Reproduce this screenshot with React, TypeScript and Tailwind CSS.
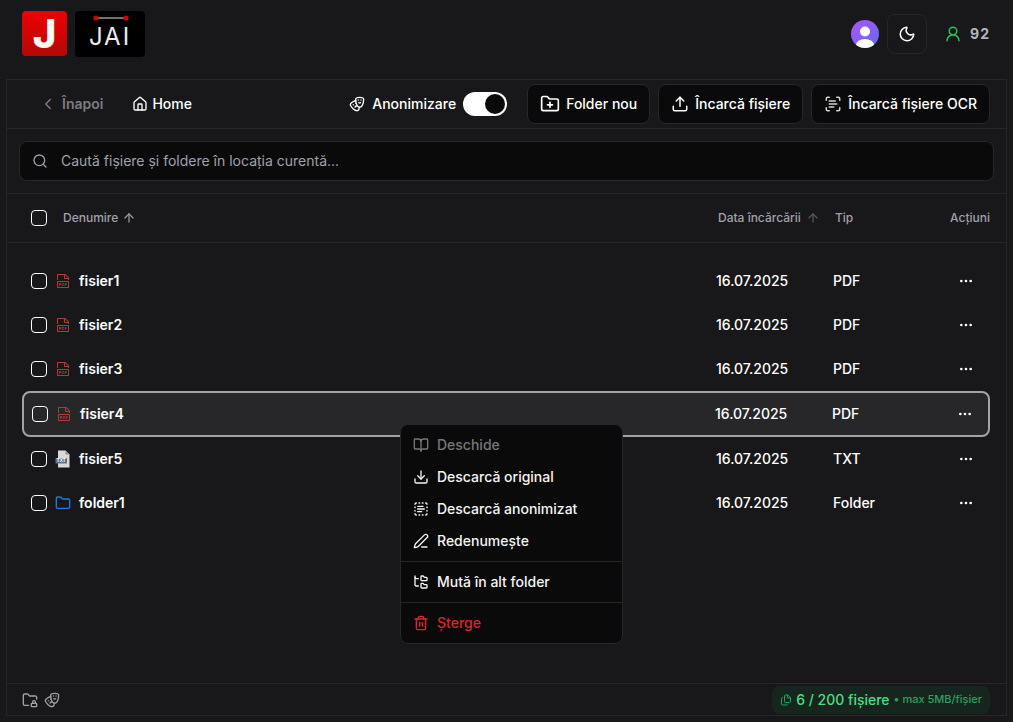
import { ArrowUp, BookOpen, ChevronLeft, Download, Drama, Ellipsis, Files, Folder, FolderLock, FolderPlus, FolderTree, House, Moon, PenLine, ScanText, Search, TextSelect, Trash2, Upload, UserRound } from "lucide-react";
import { VscFilePdf } from "react-icons/vsc";

function Box() {
  return <span className="block h-4 w-4 shrink-0 rounded-[4px] border border-white" />;
}

function TxtIcon() {
  return (
    <svg width="16" height="18" viewBox="0 0 16 18" className="shrink-0">
      <path d="M3 0.5h7.5L14.5 4.5V17.5H3z" fill="#d8d8d8" />
      <path d="M10.5 0.5V4.5H14.5z" fill="#8f8f8f" />
      <rect x="0.5" y="8" width="11.5" height="5.5" fill="#5f7286" />
      <text x="6.2" y="12.4" textAnchor="middle" fontSize="4.6" fontWeight="700" fill="#fff" fontFamily="Liberation Sans, sans-serif">TXT</text>
    </svg>
  );
}

type RowData = { name: string; type: string; kind: "pdf" | "txt" | "folder"; hi?: boolean };
const rows: RowData[] = [
  { name: "fisier1", type: "PDF", kind: "pdf" },
  { name: "fisier2", type: "PDF", kind: "pdf" },
  { name: "fisier3", type: "PDF", kind: "pdf" },
  { name: "fisier4", type: "PDF", kind: "pdf", hi: true },
  { name: "fisier5", type: "TXT", kind: "txt" },
  { name: "folder1", type: "Folder", kind: "folder" },
];

function Row({ r }: { r: RowData }) {
  return (
    <div className={r.hi ? "flex h-[46px] items-center rounded-lg border-2 border-[#a3a3a3] bg-[#27272a] pl-[8px] pr-[7px]" : "flex h-11 items-center pl-[9px] pr-[8px]"}>
      <Box />
      <div className="flex min-w-0 flex-1 items-center">
        <span className="ml-[8px] flex w-[16px] justify-center">
          {r.kind === "pdf" && <VscFilePdf className="h-[16px] w-[16px] text-[#b03a3a]" />}
          {r.kind === "txt" && <TxtIcon />}
          {r.kind === "folder" && <Folder className="h-4 w-4 text-[#1d7fd1]" />}
        </span>
        <span className="ml-[8px] text-sm font-semibold text-white">{r.name}</span>
      </div>
      <span className="w-[117px] text-sm font-medium text-white">16.07.2025</span>
      <span className="w-[117px] text-sm font-medium text-white">{r.type}</span>
      <span className="flex w-8 justify-center text-white"><Ellipsis className="h-4 w-4" /></span>
    </div>
  );
}

function ToolBtn({ icon, label }: { icon: React.ReactNode; label: string }) {
  return (
    <button className="flex h-10 items-center gap-[6px] rounded-lg border border-[#27272a] bg-[#0a0a0a] px-3 text-sm font-medium text-white">
      {icon}
      {label}
    </button>
  );
}

function MenuItem({ icon, label, cls }: { icon: React.ReactNode; label: string; cls: string }) {
  return (
    <div className={"flex h-8 items-center gap-2 rounded px-2 text-sm font-medium " + cls}>
      {icon}
      {label}
    </div>
  );
}

export default function App() {
  return (
    <div className="relative flex h-[722px] w-full flex-col overflow-hidden bg-[#18181b] [font-family:Inter,sans-serif]">
      <header className="flex h-[79px] shrink-0 items-start justify-between pl-[22px] pr-[23px]">
        <div className="mt-[11px] flex gap-2">
          <div className="flex h-[45px] w-[45px] items-center justify-center rounded-[4px] bg-gradient-to-b from-[#ee0000] to-[#b30808]">
            <span className="text-[40px] font-extrabold leading-none text-[#fff8f0]">J</span>
          </div>
          <div className="flex h-[46px] w-[70px] items-center justify-center rounded-[4px] bg-black">
            <svg width="70" height="46" viewBox="0 0 70 46">
              <line x1="21" y1="7" x2="51" y2="7" stroke="#e5e5e5" strokeWidth="1" />
              <circle cx="21" cy="7" r="2.6" fill="#d60000" />
              <circle cx="51" cy="7" r="2.6" fill="#d60000" />
              <text x="35" y="34" textAnchor="middle" fontSize="24" letterSpacing="2" fontWeight="400" fill="#ececec" fontFamily="Inter, sans-serif">JAI</text>
            </svg>
          </div>
        </div>
        <div className="mt-[14px] flex items-center">
          <div className="flex h-7 w-7 items-end justify-center overflow-hidden rounded-full bg-gradient-to-br from-[#a855f7] to-[#6366f1]">
            <svg width="28" height="28" viewBox="0 0 28 28" fill="#fff">
              <circle cx="14" cy="11.5" r="5" />
              <ellipse cx="14" cy="25" rx="9" ry="6" />
            </svg>
          </div>
          <div className="ml-2 flex h-10 w-10 items-center justify-center rounded-lg border border-[#27272a]">
            <Moon className="h-[18px] w-[18px] text-white" />
          </div>
          <UserRound className="ml-[17px] h-[18px] w-[18px] text-[#22c55e]" />
          <span className="ml-[8px] text-sm font-bold tracking-[1px] text-[#b4b4b8]">92</span>
        </div>
      </header>

      <main className="mx-[6px] mb-[6px] flex min-h-0 flex-1 flex-col border border-[#27272a]">
        <div className="flex h-[49px] shrink-0 items-center border-b border-[#27272a] pl-[32px] pr-[16px]">
          <ChevronLeft className="h-[18px] w-[18px] text-[#7c7c80]" />
          <span className="ml-[5px] text-sm font-semibold text-[#7c7c80]">Înapoi</span>
          <House className="ml-[29px] h-4 w-4 text-white" />
          <span className="ml-[4px] text-sm font-medium text-white">Home</span>
          <div className="ml-auto flex items-center">
            <Drama className="h-4 w-4 text-white" />
            <span className="ml-[7px] text-sm font-medium text-white">Anonimizare</span>
            <span className="ml-[7px] flex h-6 w-11 items-center justify-end rounded-full bg-white pr-[2px]">
              <span className="block h-5 w-5 rounded-full bg-[#0a0a0a]" />
            </span>
            <div className="ml-5 flex gap-2">
              <ToolBtn icon={<FolderPlus className="h-[20px] w-[20px]" />} label="Folder nou" />
              <ToolBtn icon={<Upload className="h-[18px] w-[18px]" />} label="Încarcă fișiere" />
              <ToolBtn icon={<ScanText className="h-[18px] w-[18px] text-[#d4d4d8]" />} label="Încarcă fișiere OCR" />
            </div>
          </div>
        </div>

        <div className="shrink-0 border-b border-[#27272a] py-3 pl-[12px] pr-[12px]">
          <div className="flex h-10 items-center gap-[13px] rounded-lg border border-[#27272a] bg-[#0a0a0a] pl-3">
            <Search className="h-4 w-4 text-[#a1a1aa]" />
            <input readOnly placeholder="Caută fișiere și foldere în locația curentă..." className="w-[600px] bg-transparent text-sm outline-none placeholder:text-[#a1a1aa]" />
          </div>
        </div>

        <div className="flex h-[49px] shrink-0 items-center border-b border-[#27272a] pl-[24px] pr-[16px] text-xs font-medium text-[#a1a1aa]">
          <Box />
          <div className="flex flex-1 items-center">
            <span className="ml-4">Denumire</span>
            <ArrowUp className="ml-1 h-[14px] w-[14px]" />
          </div>
          <div className="flex w-[117px] items-center">
            <span>Data încărcării</span>
            <ArrowUp className="ml-[5px] h-[14px] w-[14px] text-[#5c5c60]" />
          </div>
          <span className="w-[115px]">Tip</span>
          <span className="w-[40px] text-right">Acțiuni</span>
        </div>

        <div className="min-h-0 flex-1 px-[15px] pr-[16px] pt-4">
          {rows.map((r) => (
            <Row key={r.name} r={r} />
          ))}
        </div>

        <div className="flex h-8 shrink-0 items-center justify-between border-t border-[#27272a] pl-[15px] pr-[16px]">
          <div className="flex items-center gap-[6px] text-[#a1a1aa]">
            <FolderLock className="h-4 w-4" />
            <Drama className="h-4 w-4" />
          </div>
          <div className="flex h-7 items-center rounded-lg bg-[#16261f] px-2 text-[#4ade80]">
            <Files className="h-[12px] w-[12px] text-[#22a45a]" />
            <span className="ml-[4px] text-sm font-medium">6 / 200 fișiere</span>
            <span className="ml-[4px] text-[11px] font-medium text-[#2f9e5f]">• max 5MB/fișier</span>
          </div>
        </div>
      </main>

      <div className="absolute left-[400px] top-[424px] w-[223px] rounded-lg border border-[#27272a] bg-[#0a0a0a] p-1">
        <MenuItem icon={<BookOpen className="h-4 w-4" />} label="Deschide" cls="text-[#77777b]" />
        <MenuItem icon={<Download className="h-4 w-4" />} label="Descarcă original" cls="text-[#f4f4f5]" />
        <MenuItem icon={<TextSelect className="h-4 w-4" />} label="Descarcă anonimizat" cls="text-[#f4f4f5]" />
        <MenuItem icon={<PenLine className="h-4 w-4" />} label="Redenumește" cls="text-[#f4f4f5]" />
        <div className="-mx-1 my-1 h-px bg-[#27272a]" />
        <MenuItem icon={<FolderTree className="h-4 w-4" />} label="Mută în alt folder" cls="text-[#f4f4f5]" />
        <div className="-mx-1 my-1 h-px bg-[#27272a]" />
        <MenuItem icon={<Trash2 className="h-4 w-4" />} label="Șterge" cls="text-[#dc2626]" />
      </div>
    </div>
  );
}
